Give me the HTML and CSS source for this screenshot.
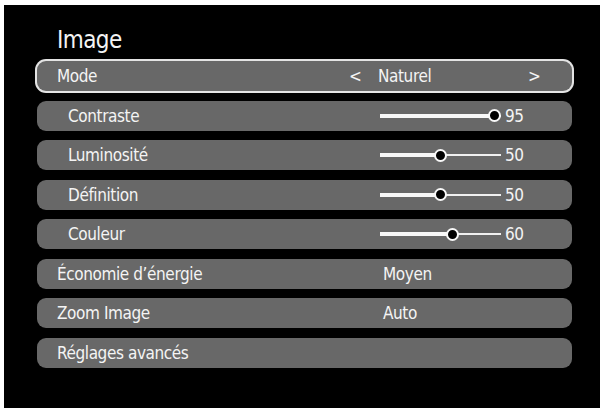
FILE: index.html
```html
<!DOCTYPE html>
<html lang="fr">
<head>
<meta charset="utf-8">
<title>Image</title>
<link rel="stylesheet" href="styles.css">
</head>
<body>
<div class="screen">
  <h1 class="title">Image</h1>
  <div class="menu">
    <div class="row selected">
      <span class="label">Mode</span>
      <span class="arrow left">&lt;</span>
      <span class="value">Naturel</span>
      <span class="arrow right">&gt;</span>
    </div>
    <div class="row sub">
      <span class="label">Contraste</span>
      <span class="slider"><span class="track"><span class="fill" style="width:95%"></span><span class="knob" style="left:95%"></span></span><span class="num">95</span></span>
    </div>
    <div class="row sub">
      <span class="label">Luminosité</span>
      <span class="slider"><span class="track"><span class="fill" style="width:50%"></span><span class="knob" style="left:50%"></span></span><span class="num">50</span></span>
    </div>
    <div class="row sub">
      <span class="label">Définition</span>
      <span class="slider"><span class="track"><span class="fill" style="width:50%"></span><span class="knob" style="left:50%"></span></span><span class="num">50</span></span>
    </div>
    <div class="row sub">
      <span class="label">Couleur</span>
      <span class="slider"><span class="track"><span class="fill" style="width:60%"></span><span class="knob" style="left:60%"></span></span><span class="num">60</span></span>
    </div>
    <div class="row">
      <span class="label">Économie d’énergie</span>
      <span class="value v2">Moyen</span>
    </div>
    <div class="row">
      <span class="label">Zoom Image</span>
      <span class="value v2">Auto</span>
    </div>
    <div class="row">
      <span class="label">Réglages avancés</span>
    </div>
  </div>
</div>
</body>
</html>
```

FILE: styles.css
```css
html, body {
  margin: 0;
  padding: 0;
  background: #ffffff;
}
body {
  width: 606px;
  height: 412px;
  overflow: hidden;
}
.screen {
  box-sizing: border-box;
  margin: 5px 0 0 4px;
  width: 596px;
  height: 403px;
  background: #000;
  padding: 15px 28px 0 33px;
  font-family: "Liberation Sans Narrow", "DejaVu Sans Condensed", "Liberation Sans", sans-serif;
  font-stretch: condensed;
  color: #f4f4f4;
}
.title {
  margin: 0 0 0 20px;
  height: 41px;
  line-height: 41px;
  font-size: 24px;
  letter-spacing: -0.6px;
  font-weight: normal;
}
.menu {
  display: flex;
  flex-direction: column;
  gap: 9.5px;
}
.row {
  position: relative;
  display: flex;
  align-items: center;
  height: 30px;
  border-radius: 9px;
  background: #686868;
  font-size: 17px;
  letter-spacing: -0.4px;
  padding-left: 20px;
}
.row.selected {
  box-shadow: 0 0 0 2px #e4e4e4;
}
.row.sub {
  padding-left: 31px;
}
.label {
  width: 321px;
  flex: none;
}
.row.sub .label {
  width: 312px;
}
.arrow {
  width: 26px;
}
.arrow.left {
  margin-left: -29px;
  width: 29px;
}
.value {
  width: 150px;
}
.v2 {
  margin-left: 5px;
}
.slider {
  display: flex;
  align-items: center;
}
.track {
  position: relative;
  width: 121px;
  height: 2px;
  background: #f0f0f0;
}
.fill {
  position: absolute;
  left: 0;
  top: -1px;
  height: 4px;
  background: #f8f8f8;
}
.knob {
  position: absolute;
  top: 1px;
  width: 9px;
  height: 9px;
  margin: -6.5px 0 0 -6.5px;
  border: 2px solid #f8f8f8;
  border-radius: 50%;
  background: #000;
}
.num {
  margin-left: 4px;
}
```
